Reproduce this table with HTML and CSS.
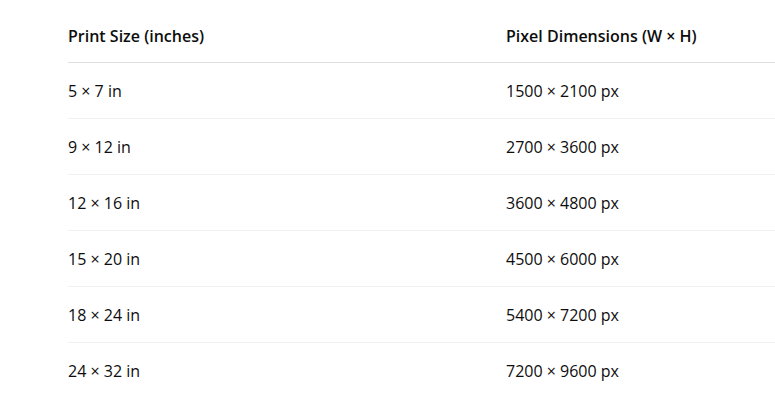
FILE: index.html
```html
<!DOCTYPE html>
<html>
<head>
<meta charset="utf-8">
<link rel="stylesheet" href="styles.css">
</head>
<body>
<div class="wrap">
  <table class="sizes">
    <thead>
      <tr><th>Print Size (inches)</th><th>Pixel Dimensions (W × H)</th></tr>
    </thead>
    <tbody>
      <tr><td>5 × 7 in</td><td>1500 × 2100 px</td></tr>
      <tr><td>9 × 12 in</td><td>2700 × 3600 px</td></tr>
      <tr><td>12 × 16 in</td><td>3600 × 4800 px</td></tr>
      <tr><td>15 × 20 in</td><td>4500 × 6000 px</td></tr>
      <tr><td>18 × 24 in</td><td>5400 × 7200 px</td></tr>
      <tr><td>24 × 32 in</td><td>7200 × 9600 px</td></tr>
    </tbody>
  </table>
</div>
</body>
</html>
```
FILE: styles.css
```css
html, body {
  margin: 0;
  padding: 0;
  background: #fff;
}
body {
  font-family: "Open Sans", "Noto Sans", sans-serif;
  color: #0d0d0d;
  overflow: hidden;
}
.wrap {
  box-sizing: border-box;
  padding: 10px 0 0 68px;
  width: 775px;
}
.sizes {
  border-collapse: collapse;
  width: 100%;
  font-size: 16px;
}
.sizes th, .sizes td {
  text-align: left;
  padding: 0;
  vertical-align: middle;
}
.sizes th {
  font-weight: 600;
  height: 52px;
  padding-top: 1px;
  box-sizing: border-box;
  border-bottom: 1px solid #dedede;
}
.sizes td {
  height: 56px;
  padding-top: 2px;
  box-sizing: border-box;
  border-bottom: 1px solid #f0f0f0;
}
.sizes tbody tr:last-child td {
  border-bottom: none;
}
.sizes th:first-child, .sizes td:first-child {
  width: 438px;
}
```
